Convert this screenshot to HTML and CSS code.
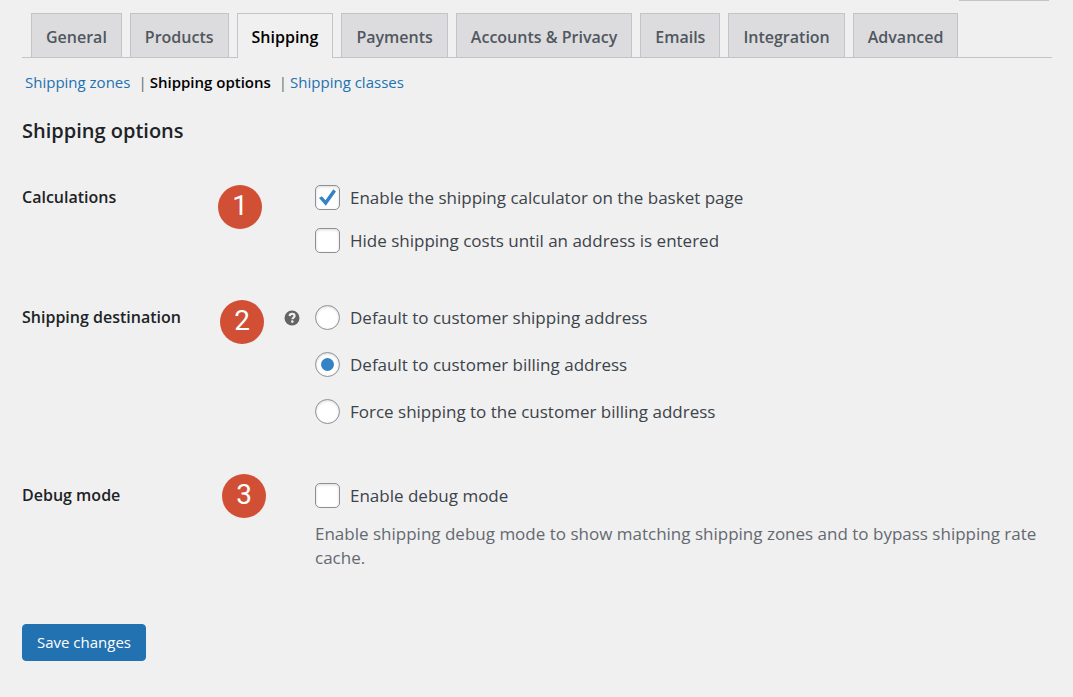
FILE: index.html
```html
<!DOCTYPE html>
<html lang="en">
<head>
	<meta charset="utf-8">
	<title>Shipping options</title>
	<link rel="stylesheet" href="styles.css">
</head>

<body>
	<div class="screen-meta"></div>

	<main class="wrap">
		<nav class="tabs">
			<a href="#" class="tab">General</a>
			<a href="#" class="tab">Products</a>
			<a href="#" class="tab tab-active">Shipping</a>
			<a href="#" class="tab">Payments</a>
			<a href="#" class="tab">Accounts &amp; Privacy</a>
			<a href="#" class="tab">Emails</a>
			<a href="#" class="tab">Integration</a>
			<a href="#" class="tab">Advanced</a>
		</nav>

		<ul class="sections">
			<li><a href="#">Shipping zones</a></li>
			<li><a href="#" class="current">Shipping options</a></li>
			<li><a href="#">Shipping classes</a></li>
		</ul>

		<form>
			<h2>Shipping options</h2>

			<div class="settings">
				<fieldset class="row">
					<legend class="title">Calculations</legend>
					<div class="fields checks">
						<label class="option"><input type="checkbox" checked>Enable the shipping calculator on the basket page</label>
						<label class="option"><input type="checkbox">Hide shipping costs until an address is entered</label>
					</div>
				</fieldset>

				<fieldset class="row">
					<legend class="title">Shipping destination</legend>
					<svg class="tip" viewBox="0 0 16 16" width="16" height="16">
						<circle cx="8" cy="8" r="7.5" fill="#646464"/>
						<path d="M5.6 6.1C5.7 4.6 6.7 3.9 8.1 3.9c1.4 0 2.5.8 2.5 2.1 0 1.6-2.2 1.7-2.2 3.2" fill="none" stroke="#f0f0f0" stroke-width="2.1"/>
						<circle cx="8.3" cy="11.6" r="1.3" fill="#f0f0f0"/>
					</svg>
					<div class="fields radios">
						<label class="option"><input type="radio" name="destination">Default to customer shipping address</label>
						<label class="option"><input type="radio" name="destination" checked>Default to customer billing address</label>
						<label class="option"><input type="radio" name="destination">Force shipping to the customer billing address</label>
					</div>
				</fieldset>

				<fieldset class="row">
					<legend class="title">Debug mode</legend>
					<div class="fields">
						<label class="option"><input type="checkbox">Enable debug mode</label>
						<p class="description">Enable shipping debug mode to show matching shipping zones and to bypass shipping rate cache.</p>
					</div>
				</fieldset>

				<!-- numbered pins on top of the form -->
				<span class="pin pin-calculations">1</span>
				<span class="pin pin-destination">2</span>
				<span class="pin pin-debug">3</span>
			</div>

			<button type="submit" class="save">Save changes</button>
		</form>
	</main>
</body>
</html>
```

FILE: styles.css
```css
* {
	box-sizing: border-box;
}

body {
	margin: 0;
	background: #f0f0f0;
	color: #3c434a;
	font-family: "Open Sans", "Noto Sans", sans-serif;
	font-size: 17px;
	line-height: 24px;
}

a {
	color: #2271b1;
	text-decoration: none;
}

.screen-meta {
	width: 90px;
	height: 1px;
	margin-left: auto;
	margin-right: 24px;
	background: #c3c4c7;
}

.wrap {
	padding: 12px 21px 36px 22px;
}

.tabs {
	display: flex;
	gap: 8px;
	padding-left: 9px;
	border-bottom: 1px solid #c3c4c7;
}

.tab {
	padding: 11px 14px 8px;
	border: 1px solid #c3c4c7;
	border-bottom: 0;
	background: #dcdcde;
	color: #50575e;
	font-size: 16px;
	font-weight: 600;
	white-space: nowrap;
}

.tab-active {
	margin-bottom: -1px;
	background: #f0f0f0;
	color: #000;
}

.sections {
	display: flex;
	margin: 0;
	padding: 12px 3px 0;
	list-style: none;
	font-size: 15px;
}

.sections li + li::before {
	content: "|";
	padding: 0 3px 0 8px;
	color: #646970;
}

.sections .current {
	color: #000;
	font-weight: 600;
}

h2 {
	margin: 24px 0 41px;
	color: #1d2327;
	font-size: 20px;
	font-weight: 600;
	line-height: 26px;
}

.settings {
	position: relative;
	display: flex;
	flex-direction: column;
	gap: 52px;
}

.row {
	display: grid;
	grid-template-columns: 247px 16px 1fr;
	column-gap: 15px;
	min-width: 0;
	margin: 0;
	padding: 0;
	border: 0;
}

.title {
	float: left;
	grid-column: 1;
	padding: 0;
	color: #1d2327;
	font-size: 16px;
	font-weight: 600;
}

.tip {
	grid-column: 2;
	grid-row: 1;
	margin-top: 5px;
}

.fields {
	grid-column: 3;
	grid-row: 1;
	display: flex;
	flex-direction: column;
	align-items: flex-start;
}

.checks {
	gap: 18px;
}

.radios {
	gap: 22px;
	padding-bottom: 7px;
}

.option {
	display: flex;
	align-items: center;
	gap: 10px;
}

input {
	flex: none;
	display: grid;
	place-content: center;
	width: 25px;
	height: 25px;
	margin: 0;
	border: 1px solid #8c8f94;
	border-radius: 5px;
	background: #fff;
	box-shadow: inset 0 1px 3px rgba(0, 0, 0, 0.15);
	appearance: none;
}

input[type="radio"] {
	border-radius: 50%;
}

input[type="checkbox"]:checked::before {
	content: "";
	width: 17px;
	height: 17px;
	background: #3582c4;
	clip-path: polygon(0 53%, 17% 42%, 38% 66%, 84% 2%, 100% 14%, 40% 98%);
}

input[type="radio"]:checked::before {
	content: "";
	width: 13px;
	height: 13px;
	border-radius: 50%;
	background: #3582c4;
}

.description {
	margin: 14px 0 0;
	color: #646970;
}

.pin {
	position: absolute;
	width: 44px;
	height: 44px;
	border-radius: 50%;
	background: #d14f34;
	color: #fff;
	font-family: Roboto, sans-serif;
	font-size: 28px;
	line-height: 42px;
	text-align: center;
}

.pin-calculations {
	top: 0;
	left: 196px;
}

.pin-destination {
	top: 115px;
	left: 198px;
}

.pin-debug {
	top: 289px;
	left: 200px;
}

.save {
	margin-top: 54px;
	padding: 6px 14px;
	border: 1px solid #2271b1;
	border-radius: 4px;
	background: #2271b1;
	color: #fff;
	font: inherit;
	font-size: 15px;
	line-height: 23px;
}
```
